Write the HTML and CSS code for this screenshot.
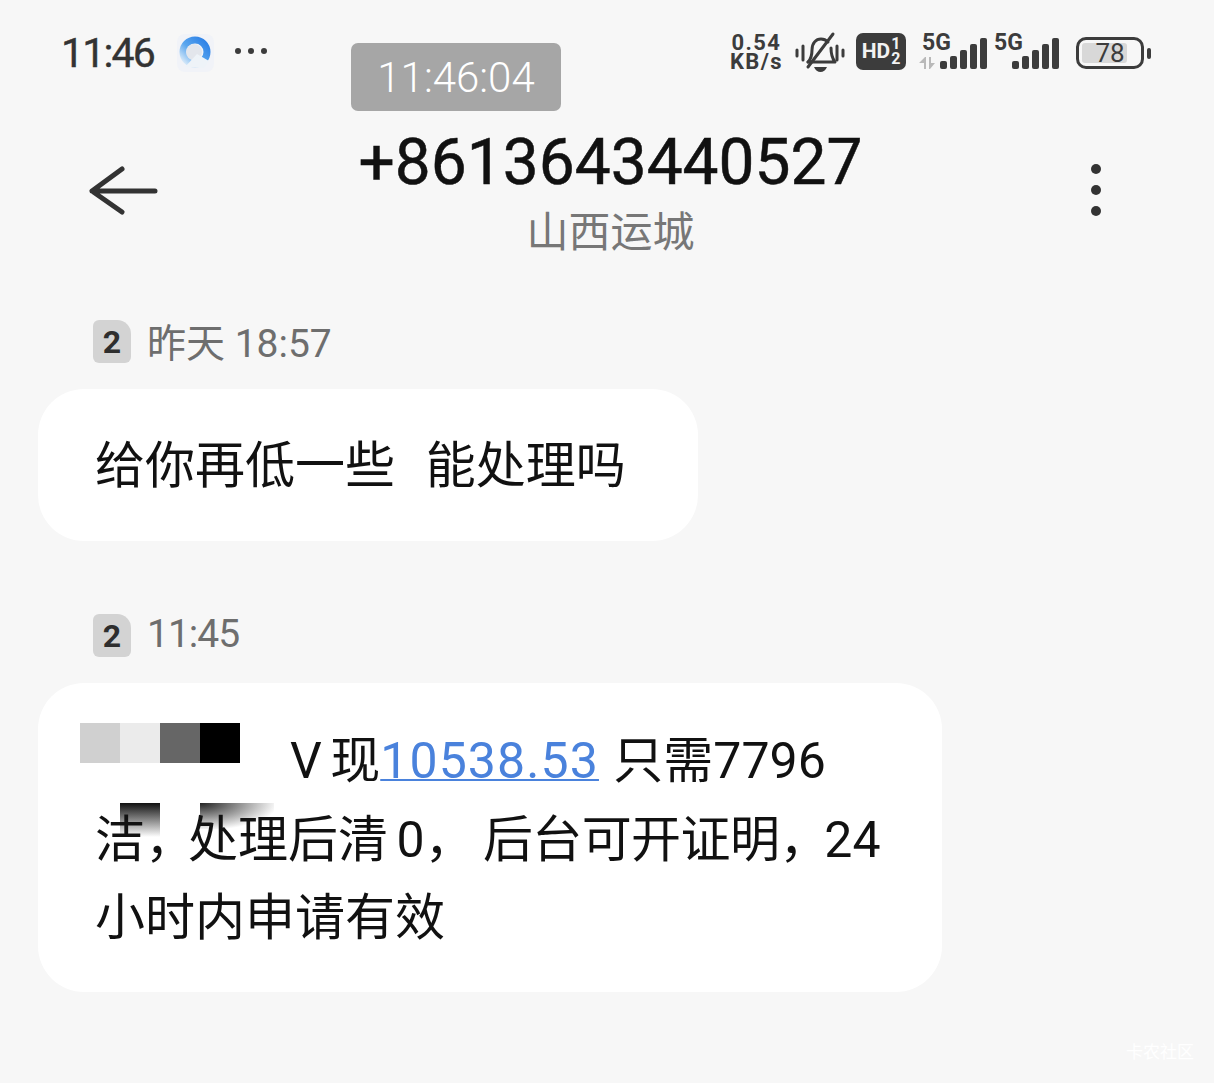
FILE: index.html
```html
<!DOCTYPE html>
<html lang="zh-CN">
<head>
<meta charset="UTF-8">
<title>+8613643440527</title>
<link rel="stylesheet" href="styles.css">
</head>
<body>
    <div class="status-bar">
        <div class="status-left">
            <span class="clock">11:46</span>
            <span class="app-icon">
                <svg width="40" height="40" viewBox="0 0 40 40">
                    <defs>
                        <linearGradient id="ring" x1="0" y1="1" x2="1" y2="0">
                            <stop offset="0" stop-color="#e4f0fa"/>
                            <stop offset=".45" stop-color="#5aa6ee"/>
                            <stop offset="1" stop-color="#2a7fe6"/>
                        </linearGradient>
                    </defs>
                    <rect x="1" y="1" width="37" height="38" rx="8" fill="#f1f3f8"/>
                    <circle cx="19" cy="19" r="12" fill="none" stroke="url(#ring)" stroke-width="7"/>
                    <circle cx="18" cy="19" r="8" fill="#e3e6ec"/>
                    <path d="M21 21 L33 28 L28 35 L9 34 Z" fill="#eef3f8"/>
                </svg>
            </span>
            <span class="dots"><i></i><i></i><i></i></span>
        </div>
        <div class="status-right">
            <span class="speed"><b>0.54</b><b>KB/s</b></span>
            <svg class="bell" width="50" height="44" viewBox="0 0 50 44">
                <g fill="none" stroke="#3c3c3c" stroke-width="3" stroke-linecap="round" stroke-linejoin="round">
                    <path d="M2 19v6M8 15v14M42 15v14M48 19v6"/>
                    <path d="M13 31c3-3 4-6 4-12 0-7 4-11 9-11 3 0 5 1 7 3"/>
                    <path d="M36 17c0 6 1 10 4 14H13"/>
                    <path d="M38 3 13 36"/>
                </g>
                <path d="M19 36h13c-1 3-4 5-6.500 5s-5.500-2-6.500-5Z" fill="#3c3c3c"/>
            </svg>
            <span class="hd"><span class="hd-text">HD</span><span class="hd-sims"><span>1</span><span>2</span></span></span>
            <span class="signal">
                <span class="net-col">
                    <span class="net">5G</span>
                    <svg width="18" height="12" viewBox="0 0 18 12"><path d="M0 6 6 0h1v12H5V6ZM10 0h2v6h4l-5 6h-1Z" fill="#b9b9b9"/></svg>
                </span>
                <span class="bars"><i class="b1"></i><i class="b2"></i><i class="b3"></i><i class="b4"></i><i class="b5"></i></span>
            </span>
            <span class="signal signal-two">
                <span class="net-col">
                    <span class="net">5G</span>
                </span>
                <span class="bars"><i class="b1"></i><i class="b2"></i><i class="b3"></i><i class="b4"></i><i class="b5"></i></span>
            </span>
            <span class="battery">
                <span class="battery-body"><span class="battery-fill"></span><span class="battery-num">78</span></span>
                <span class="battery-tip"></span>
            </span>
        </div>
    </div>

    <div class="time-pill">11:46:04</div>

    <div class="header">
        <svg class="back" width="70" height="50" viewBox="0 0 70 50">
            <path d="M33 3 3 25l0 0 30 21M3 25h63" fill="none" stroke="#333" stroke-width="5" stroke-linecap="round" stroke-linejoin="round"/>
        </svg>
        <div class="contact">
            <div class="number">+8613643440527</div>
            <div class="place">山西运城</div>
        </div>
        <div class="more"><i></i><i></i><i></i></div>
    </div>

    <div class="thread">
        <div class="msg msg-first">
            <div class="meta"><span class="sim">2</span><span>昨天 18:57</span></div>
            <div class="bubble bubble-short"><span class="word-gap">给你再低一些&nbsp;&nbsp;能处理吗</span></div>
        </div>
        <div class="msg">
            <div class="meta"><span class="sim">2</span><span class="meta-tight">11:45</span></div>
            <div class="bubble bubble-long">
                <div class="mosaic">
                    <i class="m1"></i><i class="m2"></i><i class="m3"></i><i class="m4"></i>
                </div>
                <i class="smear smear-a"></i>
                <i class="smear smear-b"></i>
                <div class="sms-text">
                    <span class="mosaic-gap"></span>V 现<a class="amount" href="#">10538.53</a> 只需7796<br>
                    洁<span class="comma">，</span>处理后清 0<span class="comma-wide">，</span> <span class="tight">后台可开证明</span><span class="comma-end">，</span>24<br>
                    小时内申请有效
                </div>
            </div>
        </div>
    </div>

    <div class="watermark">卡农社区</div>
</body>
</html>
```

FILE: styles.css
```css
* {
    box-sizing: border-box;
}
html, body {
    height: 100%;
}
body {
    margin: 0;
    position: relative;
    overflow: hidden;
    background-color: #f7f7f7;
    color: #111;
    font-family: Roboto, "Noto Sans CJK SC", sans-serif;
}
.status-bar {
    display: flex;
    justify-content: space-between;
    align-items: center;
    height: 44px;
    margin-top: 31px;
    padding: 0 63px 0 61px;
}
.status-left {
    display: flex;
    align-items: center;
}
.clock {
    font-size: 41px;
    font-weight: 400;
    letter-spacing: -1.800px;
    color: #333;
    -webkit-text-stroke: .4px #333;
}
.app-icon {
    display: flex;
    margin-left: 22px;
}
.dots {
    display: flex;
    gap: 7px;
    margin: 0 0 4px 19px;
}
.dots i {
    width: 6px;
    height: 6px;
    border-radius: 50%;
    background-color: #3c3c3c;
}
.status-right {
    display: flex;
    align-items: center;
    color: #3c3c3c;
}
.speed {
    display: flex;
    flex-direction: column;
    align-items: center;
    margin-bottom: 2px;
    font-size: 22px;
    line-height: 19px;
    letter-spacing: 1.400px;
}
.bell {
    margin-left: 12px;
}
.hd {
    display: flex;
    align-items: center;
    justify-content: center;
    width: 50px;
    height: 37px;
    margin-left: 11px;
    margin-bottom: 4px;
    border-radius: 7px;
    background-color: #3c3c3c;
    color: #f2f2f2;
    font-weight: 700;
}
.hd-text {
    font-size: 21px;
}
.hd-sims {
    display: flex;
    flex-direction: column;
    margin-left: 1px;
    font-size: 16px;
    line-height: 15px;
}
.signal {
    display: flex;
    align-items: flex-end;
    height: 36px;
    margin-bottom: 4px;
    margin-left: 16px;
}
.signal-two {
    margin-left: 7px;
}
.net-col {
    display: flex;
    flex-direction: column;
    align-self: flex-start;
    width: 18px;
}
.net-col svg {
    margin-top: 4px;
    margin-left: -3px;
}
.net {
    font-size: 23px;
    font-weight: 700;
    line-height: 20px;
    white-space: nowrap;
}
.bars {
    display: flex;
    align-items: flex-end;
    gap: 3px;
}
.bars i {
    width: 7px;
    border-radius: 2px;
    background-color: #3c3c3c;
}
.b1 { height: 8px; }
.b2 { height: 13px; }
.b3 { height: 19px; }
.b4 { height: 25px; }
.b5 { height: 31px; }
.battery {
    display: flex;
    align-items: center;
    margin-left: 17px;
}
.battery-body {
    position: relative;
    display: flex;
    align-items: center;
    justify-content: center;
    width: 68px;
    height: 32px;
    padding: 3px;
    border: 3px solid #3c3c3c;
    border-radius: 10px;
}
.battery-fill {
    position: absolute;
    left: 3px;
    top: 3px;
    bottom: 3px;
    width: 73%;
    background-color: #d8d8d8;
    border-radius: 3px;
}
.battery-num {
    position: relative;
    font-size: 26px;
    line-height: 26px;
}
.battery-tip {
    width: 4px;
    height: 11px;
    margin-left: 3px;
    border-radius: 2px;
    background-color: #3c3c3c;
}
.time-pill {
    position: absolute;
    left: 351px;
    top: 43px;
    width: 210px;
    height: 68px;
    border-radius: 7px;
    background-color: #a6a6a6;
    color: #fff;
    font-size: 42px;
    font-weight: 300;
    line-height: 70px;
    text-align: center;
}
.header {
    display: grid;
    grid-template-columns: 1fr auto 1fr;
    align-items: start;
    height: 194px;
    margin-top: 49px;
    padding: 0 113px 0 90px;
}
.back {
    margin-top: 42px;
    margin-left: -1px;
}
.contact {
    margin: 0 -30px 0 0;
    text-align: center;
}
.number {
    margin-top: 9px;
    font-size: 64px;
    font-weight: 400;
    line-height: 60px;
    color: #111;
    -webkit-text-stroke: .5px #111;
}
.place {
    margin-top: 15px;
    font-size: 42px;
    line-height: 50px;
    color: #777;
}
.more {
    display: flex;
    flex-direction: column;
    align-items: flex-end;
    gap: 11px;
    margin-top: 40px;
}
.more i {
    width: 10px;
    height: 10px;
    border-radius: 50%;
    background-color: #333;
}
.thread {
    padding: 0 38px;
}
.msg {
    margin-top: 71px;
}
.msg-first {
    margin-top: 0;
}
.meta {
    display: flex;
    align-items: center;
    gap: 16px;
    height: 44px;
    padding-left: 55px;
    margin-bottom: 27px;
    font-size: 39px;
    color: #6e6e6e;
}
.meta-tight {
    letter-spacing: -1px;
}
.sim {
    display: flex;
    align-items: center;
    justify-content: center;
    width: 38px;
    height: 43px;
    margin-top: 3px;
    border-radius: 6px 14px 6px 6px;
    background-color: #d3d3d3;
    color: #2e2e2e;
    font-size: 32px;
    font-weight: 700;
}
.bubble {
    position: relative;
    background-color: #fff;
    border-radius: 46px;
    padding: 0 57px;
    font-size: 50px;
    color: #111;
}
.bubble-short {
    width: 660px;
    height: 152px;
    line-height: 154px;
}
.word-gap {
    word-spacing: 3px;
}
.bubble-long {
    width: 904px;
    height: 309px;
    padding-top: 39px;
    line-height: 78.500px;
}
.sms-text {
    position: relative;
    white-space: nowrap;
    word-spacing: -4px;
}
.mosaic-gap {
    display: inline-block;
    width: 195px;
}
.amount {
    margin-right: 6px;
    color: #4a82dc;
    letter-spacing: 1.100px;
    text-decoration: underline;
    text-decoration-thickness: 2px;
}
.comma {
    letter-spacing: -7px;
}
.comma-wide {
    letter-spacing: 0;
}
.comma-end {
    letter-spacing: -5px;
}
.tight {
    letter-spacing: -.6px;
}
.mosaic {
    position: absolute;
    left: 42px;
    top: 40px;
    display: flex;
}
.mosaic i {
    display: block;
    width: 40px;
    height: 40px;
}
.m1 { background-color: #d0d0d0; }
.m2 { background-color: #ebebeb; }
.m3 { background-color: #666; }
.m4 { background-color: #000; }
.smear {
    position: absolute;
    top: 120px;
}
.smear-a {
    left: 82px;
    width: 40px;
    height: 40px;
    background: linear-gradient(#111, #fff 85%);
}
.smear-b {
    left: 162px;
    width: 74px;
    height: 26px;
    background: radial-gradient(ellipse at 0 0, #222, #fff 75%);
}
.watermark {
    position: absolute;
    right: 20px;
    bottom: 20px;
    font-size: 17px;
    color: #fff;
}
```
